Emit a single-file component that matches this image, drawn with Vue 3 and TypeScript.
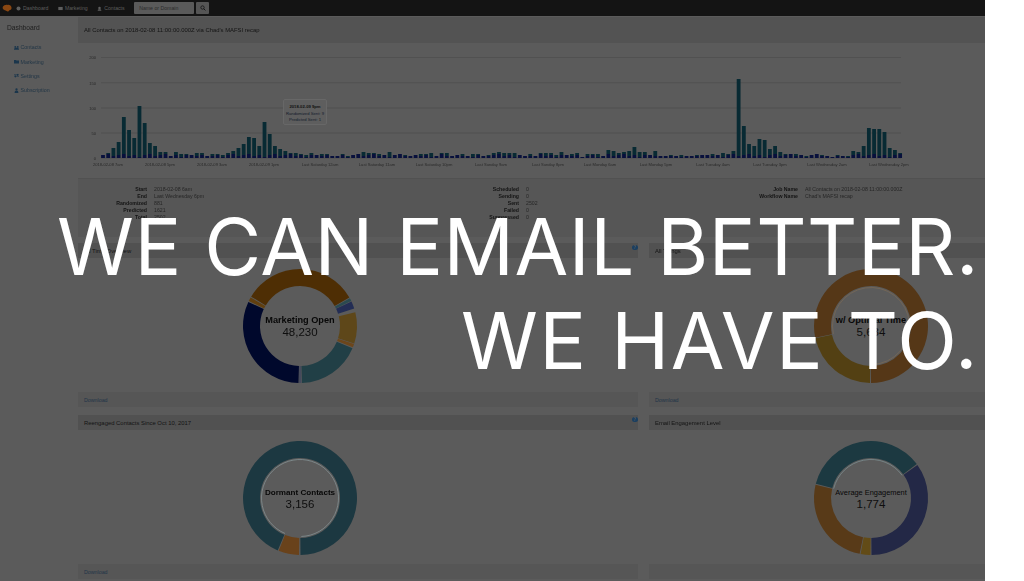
<script setup lang="ts">
interface Seg { from: number; to: number; color: string }
interface Donut { title: string; value: string; segs: Seg[]; ring: Seg[]; weightClass: string; titleSize: number }
interface Panel { title: string; help: boolean; download: boolean; donut: Donut }

const totals: number[] = [
  3,5,10,16,41,28,20,52,35,15,12,6,6,2,6,4,4,3,5,5,2,4,4,3,5,7,10,14,21,20,12,36,24,12,9,7,5,5,4,3,5,3,4,4,2,
  2,4,2,3,4,6,5,5,4,3,6,3,4,3,2,3,4,4,5,2,5,5,2,3,4,2,4,4,2,3,5,6,5,5,5,3,2,4,2,5,5,5,3,6,3,4,5,1,4,4,4,2,
  8,7,5,6,7,11,6,6,3,7,2,2,3,2,3,2,2,3,3,3,4,3,5,4,7,
  79,32,14,12,19,18,9,12,6,4,4,4,3,2,3,4,3,2,1,3,2,2,7,6,12,30,29,29,26,10,8,5
]
const pattern = [3,4,2,3,4,2,3,1]
const bars = totals.map((h, i) => {
  const navy = Math.min(h, pattern[i % 8])
  const x = 103 + i * 5.21 - 1.9
  return { key: i, x, navyY: 158 - navy, navy, tealY: 158 - h, teal: h - navy }
})
const grid = [
  { y: 57.5, label: '200' },
  { y: 82.7, label: '150' },
  { y: 108, label: '100' },
  { y: 133, label: '50' },
  { y: 158, label: '0' }
]
const xLabels = [
  { x: 108, t: '2018-02-08 7am' }, { x: 160, t: '2018-02-08 5pm' }, { x: 212, t: '2018-02-09 3am' },
  { x: 264, t: '2018-02-09 1pm' }, { x: 320, t: 'Last Saturday 12am' }, { x: 377, t: 'Last Saturday 11am' },
  { x: 434, t: 'Last Saturday 10pm' }, { x: 491, t: 'Last Sunday 9am' }, { x: 548, t: 'Last Sunday 8pm' },
  { x: 600, t: 'Last Monday 6am' }, { x: 656, t: 'Last Monday 5pm' }, { x: 713, t: 'Last Tuesday 4am' },
  { x: 770, t: 'Last Tuesday 3pm' }, { x: 827, t: 'Last Wednesday 2am' }, { x: 889, t: 'Last Wednesday 2pm' }
]
const stats: [string, string][][] = [
  [['Start','2018-02-08 6am'],['End','Last Wednesday 6pm'],['Randomized','881'],['Predicted','1621'],['Total','2502']],
  [['Scheduled','0'],['Sending','0'],['Sent','2502'],['Failed','0'],['Suppressed','0']],
  [['Job Name','All Contacts on 2018-02-08 11:00:00.000Z'],['Workflow Name',"Chad's MAFSI recap"]]
]
const panels: Panel[] = [
  { title: 'All Time Overview', help: true, download: true, donut: {
    title: 'Marketing Open', value: '48,230', weightClass: 'bold', titleSize: 9.2, ring: [],
    segs: [
      { from: -59, to: 60, color: '#4e2e04' }, { from: 61, to: 64, color: '#2a4a50' }, { from: 64.5, to: 72, color: '#232d54' },
      { from: 76, to: 108, color: '#5e4719' }, { from: 108.5, to: 112, color: '#6c461b' }, { from: 113, to: 178, color: '#213f46' },
      { from: 178.5, to: 181, color: '#454a5c' }, { from: 181.5, to: 295, color: '#00082c' }, { from: 296, to: 300, color: '#613f0f' }
    ] } },
  { title: 'All Things', help: false, download: true, donut: {
    title: 'w/ Optimal Time', value: '5,684', weightClass: 'bold', titleSize: 9.2,
    ring: [{ from: -102, to: 178, color: '#7c6a55' }],
    segs: [{ from: 258, to: 540, color: '#553717' }, { from: 181, to: 257.5, color: '#534013' }] } },
  { title: 'Reengaged Contacts Since Oct 10, 2017', help: true, download: true, donut: {
    title: 'Dormant Contacts', value: '3,156', weightClass: 'bold', titleSize: 8.1,
    ring: [{ from: -157, to: 178, color: '#8a9a9c' }],
    segs: [{ from: 203, to: 539.5, color: '#1c3841' }, { from: 181, to: 202, color: '#69421b' }] } },
  { title: 'Email Engagement Level', help: false, download: false, donut: {
    title: 'Average Engagement', value: '1,774', weightClass: 'regular', titleSize: 7.4,
    ring: [{ from: -76, to: 54, color: '#7f9396' }],
    segs: [
      { from: -75.5, to: 53.5, color: '#1c3941' }, { from: 54.5, to: 179.5, color: '#232846' },
      { from: 180.5, to: 190.5, color: '#624b17' }, { from: 191.5, to: 283.5, color: '#583a18' }
    ] } }
]

function pt(r: number, deg: number): string {
  const a = (deg * Math.PI) / 180
  return `${(r * Math.sin(a)).toFixed(2)} ${(-r * Math.cos(a)).toFixed(2)}`
}
function arc(s: Seg): string {
  const big = s.to - s.from > 180 ? 1 : 0
  const R = 57
  const r = 40
  return `M${pt(R, s.from)}A${R} ${R} 0 ${big} 1 ${pt(R, s.to)}L${pt(r, s.to)}A${r} ${r} 0 ${big} 0 ${pt(r, s.from)}Z`
}
function ringArc(s: Seg): string {
  const big = s.to - s.from > 180 ? 1 : 0
  const r = 38.5
  return `M${pt(r, s.from)}A${r} ${r} 0 ${big} 1 ${pt(r, s.to)}`
}
</script>

<template>
  <div class="page">
    <div class="stage">
      <div class="dash">
        <header class="nav">
          <svg class="logo" viewBox="0 0 12 10" aria-hidden="true">
            <path d="M1 3C2 .8 5 0 7 .7c2-.4 4 1 4.400 3 .3 2-1 3.300-2.600 3.300-.6 1.500-2.300 2-3.300 1C4 7.400 2.500 7 1.500 6 .8 5.200.6 4 1 3z" fill="#8a4712" />
          </svg>
          <a class="nav-link"><svg viewBox="0 0 8 8"><circle cx="4" cy="4" r="3.200" fill="#5e5e5e" /></svg>Dashboard</a>
          <a class="nav-link"><svg viewBox="0 0 8 8"><rect x="0.500" y="1.500" width="7" height="5" fill="#5e5e5e" /></svg>Marketing</a>
          <a class="nav-link"><svg viewBox="0 0 8 8"><circle cx="4" cy="3" r="2" fill="#5e5e5e" /><path d="M1 7.500c0-2 1.500-2.500 3-2.500s3 .5 3 2.500z" fill="#5e5e5e" /></svg>Contacts</a>
          <div class="search">
            <span class="input">Name or Domain</span>
            <span class="search-btn">
              <svg viewBox="0 0 10 10"><circle cx="4.200" cy="4.200" r="2.800" fill="none" stroke="#151515" stroke-width="1.400" /><path d="M6.300 6.300 9 9" stroke="#151515" stroke-width="1.600" /></svg>
            </span>
          </div>
        </header>

        <div class="body">
          <aside class="side">
            <h2>Dashboard</h2>
            <ul>
              <li><svg viewBox="0 0 8 8"><circle cx="2" cy="3" r="1.500" /><circle cx="6" cy="3" r="1.500" /><path d="M0 7.500c0-2 1-3 4-3s4 1 4 3z" /></svg>Contacts</li>
              <li><svg viewBox="0 0 8 8"><path d="M0 1.500h3l1 1h4v4.500H0z" /></svg>Marketing</li>
              <li><svg viewBox="0 0 8 8"><path d="M0 2.500h8v1H0zM0 5h8v1H0z" /><rect x="5" y="1.500" width="1.500" height="3" /><rect x="1.500" y="4" width="1.500" height="3" /></svg>Settings</li>
              <li><svg viewBox="0 0 8 8"><circle cx="4" cy="2.200" r="1.800" /><path d="M1 8c0-3 1-4 3-4s3 1 3 4z" /></svg>Subscription</li>
            </ul>
          </aside>

          <main class="main">
            <section class="recap">
              <div class="recap-head">All Contacts on 2018-02-08 11:00:00.000Z via Chad's MAFSI recap</div>
              <div class="chart">
                <svg class="chart-svg" viewBox="78 43 907 135">
                  <g v-for="g in grid" :key="g.y">
                    <line x1="101" x2="901" :y1="g.y" :y2="g.y" class="gridline" />
                    <text x="96" :y="g.y + 1.800" text-anchor="end" class="axis">{{ g.label }}</text>
                  </g>
                  <g v-for="b in bars" :key="b.key">
                    <rect :x="b.x" :y="b.tealY" width="3.800" :height="b.teal" fill="#082a33" />
                    <rect :x="b.x" :y="b.navyY" width="3.800" :height="b.navy" fill="#08103c" />
                  </g>
                  <text v-for="l in xLabels" :key="l.t" :x="l.x" y="166" text-anchor="middle" class="axis">{{ l.t }}</text>
                </svg>
                <div class="tip">
                  <b>2018-02-09 9pm</b>
                  <span>Randomized Sent: 9</span>
                  <span>Predicted Sent: 1</span>
                </div>
              </div>
              <div class="stats">
                <dl v-for="(col, i) in stats" :key="i">
                  <template v-for="row in col" :key="row[0]">
                    <dt>{{ row[0] }}</dt>
                    <dd>{{ row[1] }}</dd>
                  </template>
                </dl>
              </div>
            </section>

            <div class="panels">
              <section v-for="p in panels" :key="p.title" class="panel">
                <div class="panel-head">
                  {{ p.title }}
                  <span v-if="p.help" class="help">?</span>
                </div>
                <div class="panel-body">
                  <svg class="donut" viewBox="-59 -59 118 118">
                    <path v-for="s in p.donut.segs" :key="s.from" :d="arc(s)" :fill="s.color" />
                    <path v-for="r in p.donut.ring" :key="r.from" :d="ringArc(r)" :stroke="r.color" fill="none" stroke-width="0.700" />
                    <text y="-3" text-anchor="middle" class="d-title" :class="p.donut.weightClass" :style="{ fontSize: p.donut.titleSize + 'px' }">{{ p.donut.title }}</text>
                    <text y="10" text-anchor="middle" class="d-value">{{ p.donut.value }}</text>
                  </svg>
                </div>
                <div class="panel-foot"><a v-if="p.download">Download</a></div>
              </section>
            </div>
          </main>
        </div>
      </div>

      <div class="headline">
        <p class="one">WE CAN EMAIL BETTER.</p>
        <p class="two">WE HAVE TO.</p>
      </div>
    </div>
  </div>
</template>

<style>
html, body { margin: 0; background: #fff; }
</style>

<style scoped>
.page { width: 1024px; height: 581px; overflow: hidden; background: #fff; font-family: "Liberation Sans", Arial, sans-serif; }
.stage { position: relative; width: 985px; height: 581px; overflow: hidden; background: #5b5b5b; }
.dash { height: 581px; filter: blur(0.35px); }
.nav { display: flex; align-items: center; height: 16px; background: #141414; box-sizing: border-box; padding-left: 2px; color: #5e5e5e; font-size: 5.200px; }
.logo { width: 10px; height: 9px; margin-right: 4px; }
.nav-link { display: flex; align-items: center; gap: 2px; margin-right: 9.500px; }
.nav-link svg { width: 5px; height: 5px; }
.search { display: flex; align-items: center; gap: 2px; }
.input { box-sizing: border-box; width: 60px; height: 12px; padding: 3px 5px; background: #5a5a5a; border-radius: 1px; color: #2b2b2b; font-size: 5.200px; line-height: 6px; }
.search-btn { display: flex; align-items: center; justify-content: center; width: 13px; height: 12px; background: #555; border-radius: 1px; }
.search-btn svg { width: 6px; height: 6px; }
.body { display: flex; align-items: flex-start; }
.side { box-sizing: border-box; width: 78px; flex: none; padding: 7px 0 0 7px; }
.side h2 { margin: 0 0 8px; font-size: 6.700px; font-weight: 400; line-height: 9px; color: #1e1e1e; }
.side ul { margin: 0; padding: 0 0 0 7px; list-style: none; }
.side li { display: flex; align-items: center; gap: 1.500px; height: 14.400px; font-size: 5.300px; color: #223646; }
.side svg { width: 5px; height: 5px; fill: #1b364c; flex: none; }
.main { width: 907px; flex: none; padding-top: 1px; }
.recap { width: 907px; }
.recap-head { box-sizing: border-box; height: 26px; padding: 9px 6px 0; background: #535353; font-size: 5.900px; line-height: 8px; color: #141414; white-space: nowrap; }
.chart { position: relative; height: 135px; }
.chart-svg { display: block; width: 907px; height: 135px; }
.gridline { stroke: #4c4c4c; stroke-width: 0.600; }
.axis { font-size: 4.100px; fill: #2a2a2a; }
.tip { position: absolute; left: 205px; top: 56px; box-sizing: border-box; width: 44px; height: 26px; padding-top: 4px; display: flex; flex-direction: column; align-items: center; gap: 1.500px; background: #5e5e5e; border: 0.500px solid #676767; border-radius: 2px; font-size: 4.200px; line-height: 5px; color: #141c2c; }
.tip b { color: #111; }
.stats { box-sizing: border-box; height: 59px; display: grid; grid-template-columns: 372px 279px 1fr; padding-top: 6.500px; background: #565656; border-top: 1px solid #515151; }
.stats dl { margin: 0; display: grid; grid-template-columns: 69px 1fr; column-gap: 7px; grid-auto-rows: 7.200px; align-content: start; font-size: 5.200px; line-height: 7.200px; }
.stats dt { text-align: right; font-weight: 700; color: #141414; white-space: nowrap; }
.stats dd { margin: 0; color: #262626; white-space: nowrap; }
.panels { display: grid; grid-template-columns: 560px 560px; column-gap: 11px; grid-auto-rows: 164px; row-gap: 8px; margin-top: 6px; }
.panel { display: flex; flex-direction: column; height: 164px; background: #5b5b5b; }
.panel-head { position: relative; box-sizing: border-box; height: 15px; flex: none; padding: 3.500px 6px 0; background: #515151; font-size: 5.900px; line-height: 8px; color: #141414; white-space: nowrap; }
.help { position: absolute; right: 0.500px; top: 1.500px; width: 5.500px; height: 5.500px; border-radius: 50%; background: #1a3f61; color: #5b5b5b; font-size: 4.500px; line-height: 5.500px; text-align: center; font-weight: 700; }
.panel-body { flex: 1; box-sizing: border-box; padding: 8.500px 0 0 163px; }
.donut { display: block; width: 118px; height: 118px; overflow: visible; }
.d-title { fill: #080808; }
.d-title.bold { font-weight: 700; }
.d-value { font-size: 11.500px; fill: #0e0e0e; }
.panel-foot { box-sizing: border-box; height: 15px; flex: none; padding: 3.500px 6px 0; background: #565656; font-size: 5.300px; line-height: 8px; color: #223448; }
.headline { position: absolute; left: 0; right: 6px; top: 200px; text-align: right; font-family: Inter, "Liberation Sans", sans-serif; font-weight: 400; color: #fff; font-size: 78px; line-height: 94px; white-space: nowrap; }
.headline p { margin: 0; }
.headline .one { letter-spacing: 0.500px; }
.headline .two { letter-spacing: 1.500px; }
</style>
